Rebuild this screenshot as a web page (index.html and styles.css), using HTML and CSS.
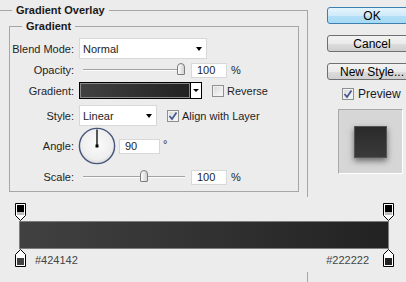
FILE: index.html
```html
<!DOCTYPE html>
<html lang="en">
<head>
  <meta charset="UTF-8">
  <title>Layer Style - Gradient Overlay</title>
  <link rel="stylesheet" href="styles.css">
</head>
<body>
  <div class="top">
    <fieldset class="outer">
      <legend>Gradient Overlay</legend>
      <fieldset class="inner">
        <legend>Gradient</legend>

        <div class="row row-blend">
          <span class="lbl">Blend Mode:</span>
          <div class="select select-blend"><span>Normal</span><i class="arrow"></i></div>
        </div>

        <div class="row row-opacity">
          <span class="lbl">Opacity:</span>
          <div class="slider"><span class="track"></span><span class="thumb" style="left: 98px"></span></div>
          <div class="num">100</div>
          <span class="unit">%</span>
        </div>

        <div class="row row-gradient">
          <span class="lbl">Gradient:</span>
          <div class="swatch">
            <span class="swatch-fill"></span>
            <span class="swatch-drop"><i class="arrow arrow-sm"></i></span>
          </div>
          <span class="check check-reverse"></span>
          <span class="check-text">Reverse</span>
        </div>

        <div class="row row-style">
          <span class="lbl">Style:</span>
          <div class="select select-style"><span>Linear</span><i class="arrow"></i></div>
          <span class="check check-align">
            <svg width="10" height="10" viewBox="0 0 10 10"><path d="M1.5 5 L4 8 L8.5 1.5" fill="none" stroke="#43588f" stroke-width="1.7"/></svg>
          </span>
          <span class="check-text">Align with Layer</span>
        </div>

        <div class="row row-angle">
          <span class="lbl">Angle:</span>
          <svg class="dial" width="38" height="38" viewBox="0 0 38 38">
            <defs>
              <radialGradient id="dialFill" cx="50%" cy="45%" r="55%">
                <stop offset="0" stop-color="#fbfbfb"/>
                <stop offset="0.8" stop-color="#eeeeee"/>
                <stop offset="1" stop-color="#d6d6d6"/>
              </radialGradient>
            </defs>
            <circle cx="19" cy="19" r="17.6" fill="url(#dialFill)" stroke="#46557a" stroke-width="1.4"/>
            <line x1="19" y1="19" x2="19" y2="2.5" stroke="#000" stroke-width="1.3"/>
            <rect x="17.5" y="17.5" width="3" height="3" fill="#000"/>
          </svg>
          <div class="num num-angle">90</div>
          <span class="deg">°</span>
        </div>

        <div class="row row-scale">
          <span class="lbl">Scale:</span>
          <div class="slider"><span class="track"></span><span class="thumb" style="left: 61px"></span></div>
          <div class="num">100</div>
          <span class="unit">%</span>
        </div>
      </fieldset>
    </fieldset>

    <div class="side">
      <button class="btn btn-ok">OK</button>
      <button class="btn">Cancel</button>
      <button class="btn">New Style...</button>
      <div class="preview-row">
        <span class="check">
          <svg width="10" height="10" viewBox="0 0 10 10"><path d="M1.5 5 L4 8 L8.5 1.5" fill="none" stroke="#43588f" stroke-width="1.7"/></svg>
        </span>
        <span class="preview-text">Preview</span>
      </div>
      <div class="preview">
        <span class="preview-square"></span>
      </div>
    </div>
  </div>

  <div class="editor">
    <div class="stops">
      <svg width="11" height="18" viewBox="0 0 11 18">
        <path d="M0.5 0.5 H10.5 V12.5 L5.5 17.5 L0.5 12.5 Z" fill="#fff" stroke="#000"/>
        <rect x="2" y="2" width="7" height="7" fill="#000"/>
        <rect x="2" y="9" width="7" height="3" fill="#bdbdbd"/>
      </svg>
      <svg width="11" height="18" viewBox="0 0 11 18">
        <path d="M0.5 0.5 H10.5 V12.5 L5.5 17.5 L0.5 12.5 Z" fill="#fff" stroke="#000"/>
        <rect x="2" y="2" width="7" height="7" fill="#000"/>
        <rect x="2" y="9" width="7" height="3" fill="#bdbdbd"/>
      </svg>
    </div>
    <div class="bar"></div>
    <div class="stops">
      <svg width="11" height="18" viewBox="0 0 11 18">
        <path d="M5.5 0.5 L10.5 5.5 V17.5 H0.5 V5.5 Z" fill="#fff" stroke="#000"/>
        <rect x="2" y="9" width="7" height="7" fill="#424142"/>
      </svg>
      <span class="hex">#424142</span>
      <span class="hex hex-end">#222222</span>
      <svg width="11" height="18" viewBox="0 0 11 18">
        <path d="M5.5 0.5 L10.5 5.5 V17.5 H0.5 V5.5 Z" fill="#fff" stroke="#000"/>
        <rect x="2" y="9" width="7" height="7" fill="#222222"/>
      </svg>
    </div>
  </div>
  <div class="tail"></div>
</body>
</html>
```

FILE: styles.css
```css
* {
  box-sizing: border-box;
}
body {
  margin: 0;
  width: 406px;
  height: 282px;
  overflow: hidden;
  background-color: #ececec;
  font-family: 'Liberation Sans', Arial, sans-serif;
  font-size: 11px;
  color: #1e1e1e;
}
.top {
  display: flex;
  height: 197px;
  overflow: hidden;
}

/* group boxes */
fieldset {
  margin: 0;
  min-width: 0;
  border: 1px solid #a6a6a6;
}
legend {
  font-weight: bold;
  line-height: 13px;
  padding: 0 4px;
  color: #1a1a1a;
}
.outer {
  flex-shrink: 0;
  width: 311px;
  height: 260px;
  margin: 4px 0 0 -3px;
  padding: 3px 8px 0 11px;
}
.outer > legend {
  margin-left: 3px;
}
.inner {
  padding: 5px 0 6px 0;
}
.inner > legend {
  margin-left: 12px;
}

/* rows */
.row {
  display: flex;
  align-items: center;
}
.row-blend { height: 21px; }
.row-opacity { height: 16px; margin-top: 3px; }
.row-gradient { height: 17px; margin-top: 4px; }
.row-style { height: 21px; margin-top: 6px; }
.row-angle { height: 38px; margin-top: 1px; }
.row-scale { height: 16px; margin-top: 4px; }
.lbl {
  width: 64px;
  margin-right: 5px;
  text-align: right;
  flex-shrink: 0;
}

/* dropdowns */
.select {
  height: 21px;
  background-color: #fff;
  border: 1px solid #d8d8d8;
  display: flex;
  align-items: center;
  justify-content: space-between;
  padding: 0 4px 0 3px;
}
.select-blend { width: 128px; }
.select-style { width: 78px; }
.arrow {
  width: 0;
  height: 0;
  border-left: 3.5px solid transparent;
  border-right: 3.5px solid transparent;
  border-top: 4px solid #000;
}
.arrow-sm {
  border-left-width: 3px;
  border-right-width: 3px;
  border-top-width: 3px;
}

/* sliders and number fields */
.slider {
  position: relative;
  width: 108px;
  height: 16px;
  display: flex;
  align-items: center;
  padding: 0 2px 0 4px;
}
.track {
  flex: 1;
  height: 2px;
  border-top: 1px solid #a3a3a3;
  border-bottom: 1px solid #fbfbfb;
}
.thumb {
  position: absolute;
  top: 1px;
  width: 8px;
  height: 12px;
  border: 1px solid #7d7d7d;
  border-radius: 4px 4px 1px 1px;
  background: linear-gradient(90deg, #fdfdfd, #d2d2d2);
}
.num {
  width: 36px;
  height: 15px;
  margin-left: 4px;
  background-color: #fff;
  border: 1px solid #d8d8d8;
  padding-left: 5px;
  line-height: 13px;
}
.num-angle {
  width: 41px;
  margin-left: 3px;
}
.unit {
  margin-left: 4px;
}
.deg {
  align-self: flex-start;
  margin: 11px 0 0 3px;
}
.dial {
  margin-left: -1px;
}

/* gradient picker */
.swatch {
  width: 123px;
  height: 17px;
  border: 1px solid #000;
  display: flex;
}
.swatch-fill {
  flex: 1;
  border: 1px solid #8a8a8a;
  background: linear-gradient(90deg, #424142, #222222);
}
.swatch-drop {
  width: 11px;
  background-color: #fff;
  border-left: 1px solid #000;
  display: flex;
  align-items: center;
  justify-content: center;
}

/* checkboxes */
.check {
  width: 12px;
  height: 12px;
  flex-shrink: 0;
  border: 1px solid #8e8f8f;
  background: linear-gradient(135deg, #d8d8d8, #fafafa);
  box-shadow: inset 0 0 0 1px #f2f2f2;
  display: flex;
  align-items: center;
  justify-content: center;
}
.check-reverse { margin-left: 10px; }
.check-align { margin-left: 10px; }
.check-text { margin-left: 3px; }

/* buttons column */
.side {
  flex-shrink: 0;
  display: flex;
  flex-direction: column;
  align-items: flex-start;
  padding-left: 19px;
}
.btn {
  flex-shrink: 0;
  width: 90px;
  height: 17px;
  margin-top: 11px;
  padding: 0;
  border: 1px solid #707070;
  border-radius: 3px;
  background: linear-gradient(#f2f2f2 0%, #ebebeb 50%, #dddddd 51%, #cfcfcf 100%);
  font-family: 'Liberation Sans', Arial, sans-serif;
  font-size: 12px;
  line-height: 14px;
  color: #000;
  text-align: center;
}
.btn-ok {
  margin-top: 7px;
  border-color: #3c7fb1;
  background: linear-gradient(#e5f4fc 0%, #cfebfa 50%, #b4dff7 51%, #a6d9f5 100%);
}
.preview-row {
  display: flex;
  align-items: center;
  height: 12px;
  margin: 8px 0 0 15px;
  font-size: 12px;
}
.preview-text {
  margin-left: 4px;
  color: #141a2e;
}
.preview {
  width: 65px;
  height: 65px;
  margin: 9px 0 0 11px;
  border: 1px solid #fff;
  border-top-color: #a9a9a9;
  border-left-color: #a9a9a9;
  background-color: #d6d6d6;
  display: flex;
  align-items: center;
  justify-content: center;
}
.preview-square {
  width: 33px;
  height: 32px;
  margin-top: 1px;
  border: 1px solid #555;
  background: linear-gradient(to top, #3a3a3a, #2a2a2a);
  box-shadow: 0 3px 6px rgba(0, 0, 0, 0.5);
}

/* gradient editor */
.editor {
  height: 75px;
  padding: 6px 12px 0 15px;
}
.stops {
  display: flex;
  align-items: flex-end;
  justify-content: space-between;
  height: 18px;
}
.stops svg {
  display: block;
}
.bar {
  height: 28px;
  margin: 0 5px 0 4px;
  border: 1px solid #7d7d7d;
  background: linear-gradient(90deg, #424142, #222222);
}
.hex {
  line-height: 13px;
  margin-left: 9px;
  color: #454545;
}
.hex-end {
  margin-left: auto;
  margin-right: 14px;
}
.tail {
  width: 308px;
  height: 10px;
  border-right: 1px solid #a6a6a6;
}
```
